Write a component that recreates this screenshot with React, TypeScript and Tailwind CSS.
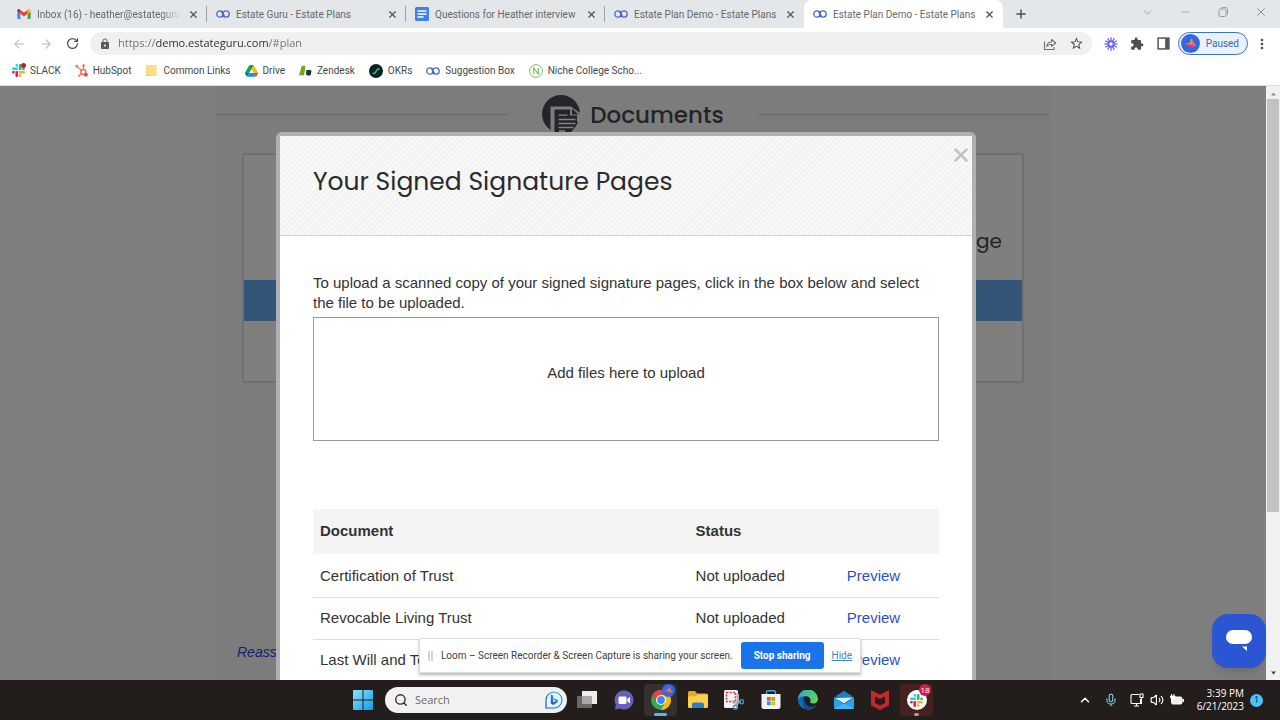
import React from "react";
import {
  ArrowLeft,
  ArrowRight,
  ChevronDown,
  ChevronUp,
  Mic,
  Minus,
  Plus,
  RotateCw,
  Search,
  Volume2,
  X,
} from "lucide-react";
import { MdExtension, MdLock, MdMoreVert, MdOutlineStarBorder } from "react-icons/md";

type IconProps = { className?: string };

const Gmail = () => (
  <svg viewBox="0 0 24 18" className="h-[10px] w-[14px]">
    <path d="M1.6 18H5.5V8.7L0 4.6v11.8C0 17.300.7 18 1.600 18z" fill="#4285f4" />
    <path d="M18.500 18h3.900c.9 0 1.600-.7 1.600-1.600V4.600l-5.500 4.100z" fill="#34a853" />
    <path d="M18.500 1.600v7.100L24 4.600V2.500C24 .4 21.700-.7 20.100.500z" fill="#fbbc04" />
    <path d="M5.500 8.700V1.600L12 6.500l6.500-4.900v7.100L12 13.600z" fill="#ea4335" />
    <path d="M0 2.500v2.100l5.500 4.100V1.600L3.900.5C2.300-.7 0 .4 0 2.500z" fill="#c5221f" />
  </svg>
);

const Rings = () => (
  <svg viewBox="0 0 14 10" className="h-[10px] w-[14px]" fill="none" strokeWidth="1.300">
    <circle cx="4" cy="5" r="3.200" stroke="#4a67c6" />
    <circle cx="10" cy="5" r="3.200" stroke="#4a67c6" />
    <path d="M5.500 3.200L8.500 6.800" stroke="#4a67c6" />
  </svg>
);

const Docs = () => (
  <svg viewBox="0 0 14 14" className="size-[14px]">
    <rect width="14" height="14" rx="1.500" fill="#4080ea" />
    <path d="M2.500 4h9M2.500 7h9M2.500 10h6" stroke="#fff" strokeWidth="1.500" />
  </svg>
);

const Slack = ({ className }: IconProps) => (
  <svg viewBox="0 0 24 24" className={className}>
    <path d="M5 15.200a2.500 2.500 0 1 1-2.500-2.500H5zM6.300 15.200a2.500 2.500 0 0 1 5 0v6.300a2.500 2.500 0 0 1-5 0z" fill="#e01e5a" />
    <path d="M8.800 5a2.500 2.500 0 1 1 2.500-2.500V5zM8.800 6.300a2.500 2.500 0 0 1 0 5H2.500a2.500 2.500 0 0 1 0-5z" fill="#36c5f0" />
    <path d="M19 8.800a2.500 2.500 0 1 1 2.500 2.500H19zM17.700 8.800a2.500 2.500 0 0 1-5 0V2.500a2.500 2.500 0 0 1 5 0z" fill="#2eb67d" />
    <path d="M15.200 19a2.500 2.500 0 1 1-2.500 2.500V19zM15.200 17.700a2.500 2.500 0 0 1 0-5h6.300a2.500 2.500 0 0 1 0 5z" fill="#ecb22e" />
  </svg>
);

const SlackBookmark = () => (
  <span className="relative flex">
    <Slack className="size-[13px]" />
    <span className="absolute -top-px -right-px size-[5px] rounded-full bg-[#d8131d]" />
  </span>
);

const HubSpot = () => (
  <svg viewBox="0 0 14 14" className="size-[13px]" fill="none" stroke="#f0705a">
    <circle cx="9" cy="8.500" r="2.700" strokeWidth="1.600" />
    <path d="M9.200 5.800V2.500M7 7L2.300 2.800M7 10.500l-2.300 2" strokeWidth="1.300" />
    <g fill="#f0705a" stroke="none">
      <circle cx="9.200" cy="1.800" r="1.400" />
      <circle cx="1.900" cy="2.400" r="1.500" />
      <circle cx="4.500" cy="12.600" r="1.200" />
      <circle cx="11.700" cy="11.500" r="2.200" fill="#e14a5a" />
    </g>
  </svg>
);

const Folder = () => (
  <svg viewBox="0 0 14 14" className="size-[13px]">
    <path d="M2 1h10.500v12H1V2a1 1 0 0 1 1-1z" fill="#fbdf82" />
    <path d="M1 11.500L12.500 13H1z" fill="#eecb5e" />
  </svg>
);

const Drive = () => (
  <svg viewBox="0 0 87 78" className="h-[12px] w-[13px]">
    <path d="M6.600 66.850l3.850 6.650c.8 1.400 1.950 2.500 3.300 3.300L27.500 53H0c0 1.550.4 3.100 1.200 4.500z" fill="#0066da" />
    <path d="M43.650 25L29.900 1.200c-1.350.8-2.500 1.900-3.300 3.300L1.200 48.500A9 9 0 0 0 0 53h27.500z" fill="#00ac47" />
    <path d="M73.550 76.800c1.350-.8 2.500-1.900 3.300-3.300l9.250-16c.8-1.400 1.200-2.950 1.200-4.500H59.800l5.850 11.500z" fill="#ea4335" />
    <path d="M43.650 25L57.400 1.200C56.050.4 54.500 0 52.900 0H34.400c-1.600 0-3.150.45-4.500 1.200z" fill="#00832d" />
    <path d="M59.800 53H27.500L13.750 76.800c1.350.8 2.900 1.200 4.500 1.200h50.800c1.600 0 3.150-.45 4.500-1.200z" fill="#2684fc" />
    <path d="M73.400 26.500L60.700 4.500c-.8-1.400-1.950-2.500-3.300-3.300L43.650 25 59.800 53h27.450c0-1.550-.4-3.100-1.200-4.500z" fill="#ffba00" />
  </svg>
);

const Zendesk = () => (
  <svg viewBox="0 0 14 14" className="size-[13px]">
    <path d="M3 2h4L5.500 12H0z" fill="#78a31b" />
    <path d="M8 6.500h4.500l1 1-1 5H9L7.500 11z" fill="#123a3e" />
  </svg>
);

const Okrs = () => (
  <svg viewBox="0 0 14 14" className="size-[14px]">
    <circle cx="7" cy="7" r="7" fill="#0c2127" />
    <path d="M3.500 9c1.500 1 2.500.5 3.500-1.500S9.200 4.500 10.700 5" fill="none" stroke="#2fc08a" strokeWidth="1.500" />
  </svg>
);

const Niche = () => (
  <svg viewBox="0 0 14 14" className="size-[14px]" fill="none" stroke="#7fbb6a">
    <circle cx="7" cy="7" r="6.400" />
    <path d="M4.700 10V4.200l4.600 5.600V4" strokeWidth="1.200" />
  </svg>
);

const Share = () => (
  <svg viewBox="0 0 14 14" className="size-[14px]" fill="none" stroke="#6b6e71" strokeWidth="1.100">
    <path d="M1.500 4.500V12.500H11V10" />
    <path d="M3.800 9.500C4 6.500 5.800 5 8.500 5V2.500L12.800 6 8.500 9.300V7.200C6.500 7.200 5 7.800 3.800 9.500z" strokeLinejoin="round" />
  </svg>
);

const LoomMark = () => (
  <svg viewBox="-8 -8 16 16" className="size-[14px]" stroke="#625df5" strokeWidth="1.400" fill="none">
    <circle r="3" strokeWidth="2" />
    {[0, 30, 60, 90, 120, 150, 180, 210, 240, 270, 300, 330].map((a) => (
      <path key={a} d="M0-3.500V-7.600" transform={`rotate(${a})`} />
    ))}
  </svg>
);

const SidePanel = () => (
  <svg viewBox="0 0 12 12" className="size-[13px]">
    <rect x="1" y="1" width="10" height="10" fill="none" stroke="#54575a" strokeWidth="1.400" />
    <path d="M7.500 1H11v10H7.500z" fill="#54575a" />
  </svg>
);

const Avatar = ({ className }: IconProps) => (
  <svg viewBox="0 0 20 20" className={className}>
    <circle cx="10" cy="10" r="10" fill="#2f6be0" />
    <path d="M3.500 10.500L9 9.500 11 4l1.800 8z" fill="#f58271" />
    <path d="M11 4l5 8.500-3.200 1z" fill="#f0695f" />
    <path d="M3.500 10.500l9 .5.500 4z" fill="#e8464c" />
  </svg>
);

const Restore = () => (
  <svg viewBox="0 0 10 10" className="size-[10px]" fill="none" stroke="#979a9d">
    <rect x="1" y="2" width="7" height="7.500" rx="1.500" />
    <path d="M3 1.500C3.200.8 3.600.6 4.200.6H7.700C8.900.6 9.500 1.300 9.500 2.400V6.500c0 .7-.3 1.100-.9 1.300" />
  </svg>
);

const DocumentsIcon = () => (
  <svg viewBox="0 0 38 38" className="size-[38px]">
    <circle cx="19" cy="19" r="19" fill="#24252a" />
    <path d="M8.500 36V11.500H29L38 18V27H35V20.500H28V14.500H12.500V38H8.500z" fill="#7c7c7c" />
    <path d="M14 38V16H26.500V22H35V27C34 32 31 35 28 38z" fill="#24252a" />
    <path d="M30 13.500L36.500 19.500H30z" fill="#24252a" />
    <path d="M16.500 20.200h9M16.500 24.500h17M16.500 28.500h17M16.500 32.500h15M17 36h6" stroke="#858585" strokeWidth="1.300" />
  </svg>
);

const WindowsLogo = () => (
  <svg viewBox="0 0 20 20" className="size-5">
    <defs>
      <linearGradient id="win" x1="0" y1="0" x2="1" y2="1">
        <stop offset="0" stopColor="#8be3fc" />
        <stop offset="1" stopColor="#129be8" />
      </linearGradient>
    </defs>
    <path d="M0 1a1 1 0 0 1 1-1h8.500v9.500H0zM10.500 0H19a1 1 0 0 1 1 1v8.500h-9.500zM0 10.500h9.500V20H1a1 1 0 0 1-1-1zM10.500 10.500H20V19a1 1 0 0 1-1 1h-8.500z" fill="url(#win)" />
  </svg>
);

const Bing = () => (
  <svg viewBox="0 0 18 18" className="size-[18px]">
    <defs>
      <linearGradient id="bing" x1="0" y1="1" x2="1" y2="0">
        <stop offset="0" stopColor="#1a4fd0" />
        <stop offset="1" stopColor="#2bb5e0" />
      </linearGradient>
    </defs>
    <path d="M1 17V9A8 8 0 1 1 9 17z" fill="#e8f4fd" stroke="url(#bing)" strokeWidth="1.200" />
    <path d="M5.800 3.500L8.200 4.500V11.300L11 9.900 9.400 9.100 8.600 7.200 12.800 8.800V11.200L8.200 14 5.800 12.600z" fill="url(#bing)" />
  </svg>
);

const TaskView = () => (
  <svg viewBox="0 0 20 20" className="size-5">
    <rect x="5" y="1" width="15" height="13" fill="#eeeded" />
    <rect x="0" y="6" width="15" height="12" fill="#777372" fillOpacity=".85" />
    <rect x="5" y="6" width="10" height="8" fill="#a9a7a6" />
  </svg>
);

const TeamsChat = () => (
  <svg viewBox="0 0 20 20" className="size-5">
    <path d="M10 .5a9.500 9.500 0 1 1-4 18.100L1 19.500l.8-4.800A9.500 9.500 0 0 1 10 .5z" fill="#655fc0" />
    <rect x="4.500" y="6.500" width="8" height="7.500" rx="1.200" fill="#fff" />
    <path d="M13.300 9L16 7v6.500l-2.700-2z" fill="#fff" />
  </svg>
);

const Chrome = () => (
  <svg viewBox="0 0 20 20" className="size-5">
    <circle cx="10" cy="10" r="10" fill="#34a853" />
    <path d="M1.340 5A10 10 0 0 1 18.660 5H10L5.670 12.500z" fill="#ea4335" />
    <path d="M18.660 5A10 10 0 0 1 10 20L14.330 12.500 10 5z" fill="#fbbc04" />
    <circle cx="10" cy="10" r="5" fill="#fff" />
    <circle cx="10" cy="10" r="3.900" fill="#4285f4" />
  </svg>
);

const Explorer = () => (
  <svg viewBox="0 0 20 20" className="size-5">
    <path d="M0 2.500A1.500 1.500 0 0 1 1.500 1H7l2 2.500H18A2 2 0 0 1 20 5.500V8H0z" fill="#e9a820" />
    <path d="M0 6.500L7.500 6.500 9.500 4.500H20V16.500A1.500 1.500 0 0 1 18.500 18H1.500A1.500 1.500 0 0 1 0 16.500z" fill="#fcd04b" />
    <path d="M4 18v-3.500A2 2 0 0 1 6 12.500h8a2 2 0 0 1 2 2V18z" fill="#2680c8" />
  </svg>
);

const Snip = () => (
  <svg viewBox="0 0 20 20" className="size-5">
    <rect x="0" y="0" width="14" height="18" rx="1.500" fill="#f3f1f1" />
    <rect x="2.500" y="2.500" width="9" height="9" fill="none" stroke="#c9413c" strokeWidth="1.700" strokeDasharray="2 1.200" />
    <path d="M14 4v8.500l-2 2.500M8.500 12.500h6l2.500-1" fill="none" stroke="#a9b0b6" strokeWidth="2" />
    <circle cx="11.500" cy="17.200" r="2" fill="none" stroke="#2f91cf" strokeWidth="1.400" />
    <circle cx="17.700" cy="11.700" r="2" fill="none" stroke="#2f91cf" strokeWidth="1.400" />
  </svg>
);

const Store = () => (
  <svg viewBox="0 0 20 20" className="size-5">
    <path d="M5.500 4V2A1.500 1.500 0 0 1 7 .7h6A1.500 1.500 0 0 1 14.500 2v2" fill="none" stroke="#3fa9dd" strokeWidth="1.400" />
    <path d="M.5 4h19v12.500A2.500 2.500 0 0 1 17 19H3A2.500 2.500 0 0 1 .5 16.500z" fill="#f2f2f2" />
    <path d="M6 7h3.700v3.700H6z" fill="#e8532e" />
    <path d="M10.400 7h3.700v3.700h-3.700z" fill="#7eb71b" />
    <path d="M6 11.400h3.700v3.700H6z" fill="#1b9fe0" />
    <path d="M10.400 11.400h3.700v3.700h-3.700z" fill="#f6b512" />
  </svg>
);

const Edge = () => (
  <svg viewBox="0 0 20 20" className="size-5">
    <defs>
      <linearGradient id="edge" x1="0" y1="0" x2="1" y2=".3">
        <stop offset="0" stopColor="#2aa5dc" />
        <stop offset="1" stopColor="#5fd35c" />
      </linearGradient>
    </defs>
    <path d="M0 10A10 10 0 0 1 20 8.800C20 12 17.800 13.600 15.200 13.600 12.800 13.600 11.400 12.600 12.300 11.400 13.200 9 11.400 6.300 7.800 6.300 4 6.300 1 8 0 10z" fill="url(#edge)" />
    <path d="M0 10C1 7.800 4 6.300 7.300 6.500 4.500 8 4.500 12 6.800 15 9 17.500 13.500 18.200 18.200 15.200A10 10 0 0 1 0 10z" fill="#1869bd" />
    <path d="M7.300 9C6.200 12.500 9 17.500 15 16.800c1.300-.2 2.300-.8 3.200-1.600A10 10 0 0 1 9 20C4.500 17.500 4 11 7.300 9z" fill="#114d97" />
  </svg>
);

const Mail = () => (
  <svg viewBox="0 0 20 20" className="size-5">
    <path d="M0 7.500L10 .5l10 7V10H0z" fill="#1464ad" />
    <path d="M2.500 5.800L10 1.500l7.500 4.300L10 12z" fill="#1e7cc8" />
    <path d="M1 8l18-.5L10 13.500z" fill="#d9eefb" />
    <path d="M0 7.500l10 6.500 10-6.500V18a1 1 0 0 1-1 1H1a1 1 0 0 1-1-1z" fill="#29a3ea" />
    <path d="M0 19l10-5.500 10 5.500z" fill="#45b4f0" />
  </svg>
);

const McAfee = () => (
  <svg viewBox="0 0 20 20" className="size-5">
    <path d="M1 0l9 4.500L19 0v15.500L10 20l-9-4.500z" fill="#c1272d" />
    <path d="M5 6.500l5 2.600 5-2.600v6.600L10 15.600 5 13.100z" fill="#2a1716" />
  </svg>
);

const Network = () => (
  <svg viewBox="0 0 14 14" className="size-[14px]" fill="none" stroke="#fff" strokeWidth="1.100">
    <path d="M9 1.500H2A1 1 0 0 0 1 2.500v7a1 1 0 0 0 1 1h8.500V6M4 13h5M6.500 10.500V13M10 1h3v3.500h-3zM11.500 4.500V11" />
  </svg>
);

const Battery = () => (
  <svg viewBox="0 0 14 14" className="size-[14px]">
    <rect x="1.500" y="4" width="10.500" height="7" rx="1.500" fill="#ededed" stroke="#fff" />
    <path d="M12.500 6H14v3h-1.500z" fill="#fff" />
    <path d="M1.500 1v2M4 1v2M.5 3H5V5.500L3.500 7 1 5.500z" stroke="#fff" fill="#fff" />
  </svg>
);

const tabs = [
  { title: "Inbox (16) - heather@estateguru", icon: <Gmail /> },
  { title: "Estate Guru - Estate Plans", icon: <Rings /> },
  { title: "Questions for Heather interview", icon: <Docs /> },
  { title: "Estate Plan Demo - Estate Plans", icon: <Rings /> },
  { title: "Estate Plan Demo - Estate Plans", icon: <Rings />, active: true },
];

const bookmarks = [
  { label: "SLACK", icon: <SlackBookmark /> },
  { label: "HubSpot", icon: <HubSpot /> },
  { label: "Common Links", icon: <Folder /> },
  { label: "Drive", icon: <Drive /> },
  { label: "Zendesk", icon: <Zendesk /> },
  { label: "OKRs", icon: <Okrs /> },
  { label: "Suggestion Box", icon: <Rings /> },
  { label: "Niche College Scho...", icon: <Niche /> },
];

const documents = [
  { name: "Certification of Trust", status: "Not uploaded" },
  { name: "Revocable Living Trust", status: "Not uploaded" },
  { name: "Last Will and Testament", status: "Not uploaded" },
];

function TabStrip() {
  return (
    <div className="flex h-7 shrink-0 bg-[#e4e7ea] pl-2 font-[Roboto,sans-serif] text-[10px] text-[#66696c]">
      {tabs.map((tab, i) => (
        <div
          key={i}
          className={
            tab.active
              ? "flex w-[199px] min-w-0 items-center gap-[6px] rounded-t-lg bg-white pr-2 pl-[9px]"
              : "flex w-[199px] min-w-0 items-center gap-[6px] pl-[9px]"
          }
        >
          <span className="flex w-[14px] shrink-0">{tab.icon}</span>
          <button
            className={
              i === 0
                ? "min-w-0 flex-1 mask-r-from-85% text-left whitespace-nowrap"
                : "min-w-0 flex-1 text-left whitespace-nowrap"
            }
          >
            {tab.title}
          </button>
          <button aria-label="Close tab" className="flex w-[11px] shrink-0 justify-center">
            <X size={11} strokeWidth={2.500} color="#4c4f52" />
          </button>
          {!tab.active && <span className={i === 3 ? "ml-px w-px" : "ml-px h-4 w-px bg-[#9da0a3]"} />}
        </div>
      ))}
      <button aria-label="New tab" className="flex w-9 items-center justify-center">
        <Plus size={14} strokeWidth={2.500} color="#4c4f52" />
      </button>
      <div className="ml-auto flex pb-1">
        <button aria-label="Search tabs" className="flex w-[38px] items-center justify-center">
          <ChevronDown size={13} strokeWidth={1.500} color="#979a9d" />
        </button>
        <button aria-label="Minimize" className="flex w-[38px] items-center justify-center">
          <Minus size={12} strokeWidth={1.500} color="#979a9d" />
        </button>
        <button aria-label="Restore" className="flex w-[38px] items-center justify-center">
          <Restore />
        </button>
        <button aria-label="Close window" className="flex w-[38px] items-center justify-center">
          <X size={14} strokeWidth={1.500} color="#858789" />
        </button>
      </div>
    </div>
  );
}

function Toolbar() {
  return (
    <div className="flex h-[31px] shrink-0 items-center bg-white pr-[10px] pl-[5px]">
      <button aria-label="Back" className="flex w-[27px] justify-center">
        <ArrowLeft size={14} strokeWidth={1.800} color="#b4b6b8" />
      </button>
      <button aria-label="Forward" className="flex w-[27px] justify-center">
        <ArrowRight size={14} strokeWidth={1.800} color="#b4b6b8" />
      </button>
      <button aria-label="Reload" className="flex w-[26px] justify-center">
        <RotateCw size={13} strokeWidth={2.300} color="#4c4f52" />
      </button>
      <div className="ml-[5px] flex h-[23px] min-w-0 flex-1 items-center rounded-full bg-[#eff1f1] px-2">
        <MdLock size={12} color="#5a5d60" className="ml-px" />
        <input
          aria-label="Address"
          defaultValue="https://demo.estateguru.com/#plan"
          className="ml-[7px] min-w-0 flex-1 bg-[linear-gradient(to_right,#6b6e71_37px,#27292b_37px,#27292b_150px,#6b6e71_150px)] bg-clip-text text-[11px] text-transparent caret-gray-700 outline-none"
        />
        <button aria-label="Share this page" className="mr-3">
          <Share />
        </button>
        <button aria-label="Bookmark this tab">
          <MdOutlineStarBorder size={15} color="#4c4f52" />
        </button>
      </div>
      <button aria-label="Loom" className="ml-3">
        <LoomMark />
      </button>
      <button aria-label="Extensions" className="ml-3">
        <MdExtension size={14} color="#4c4f52" />
      </button>
      <button aria-label="Side panel" className="ml-[13px]">
        <SidePanel />
      </button>
      <button className="ml-2 flex h-[23px] items-center gap-[6px] rounded-full border border-[#3b74c4] bg-[#e9f1fc] pr-2 pl-[2px] font-[Roboto,sans-serif] text-[10px] text-[#3a69ad]">
        <Avatar className="size-[19px]" />
        Paused
      </button>
      <button aria-label="Menu" className="ml-[6px]">
        <MdMoreVert size={16} color="#4c4f52" />
      </button>
    </div>
  );
}

function Bookmarks() {
  return (
    <nav className="flex h-[27px] shrink-0 gap-[14px] border-b border-[#dcdedf] bg-white px-3 pb-[3px] font-[Roboto,sans-serif] text-[10px] text-[#45484b]">
      {bookmarks.map((b) => (
        <a key={b.label} href="#bookmark" className="flex items-center gap-[5px] whitespace-nowrap">
          {b.icon}
          {b.label}
        </a>
      ))}
    </nav>
  );
}

function PlanPage() {
  return (
    <div className="flex h-full justify-center bg-[#7f7f7f]">
      <div className="w-[834px] bg-[#7c7c7c] pt-[9px]">
        <div className="flex items-center">
          <span className="h-px flex-1 bg-[#686868]" />
          <h1 className="flex items-center gap-[10px] px-[34px] font-[Poppins,Inter,sans-serif] text-[23px] font-medium text-[#222427]">
            <DocumentsIcon />
            <span className="pt-[2px]">Documents</span>
          </h1>
          <span className="h-px flex-1 bg-[#686868]" />
        </div>
        <div className="mx-[26px] mt-5 rounded-[3px] border-2 border-[#707070] bg-[#7f7f7f]">
          <p className="h-[125px] pt-[72px] pr-5 text-right font-[Poppins,Inter,sans-serif] text-xl text-[#222427]">
            Signature Page
          </p>
          <div className="h-[41px] bg-[#335577]" />
          <div className="h-[60px]" />
        </div>
        <a href="#reassess" className="mt-[259px] ml-[21px] block w-max text-sm text-[#14246e] italic">
          Reassess
        </a>
      </div>
    </div>
  );
}

function SignatureDialog() {
  return (
    <div
      role="dialog"
      aria-labelledby="dialog-title"
      className="w-[700px] rounded-t-md border-4 border-b-0 border-[#b0b0b0] bg-white text-[15px] text-[#333]"
    >
      <header className="relative flex h-[100px] items-center border-b border-[#d3d5d5] bg-[repeating-linear-gradient(135deg,#f9f9f9_0px,#f9f9f9_2px,#f2f2f2_2px,#f2f2f2_4px)] px-[33px] pb-2">
        <h2 id="dialog-title" className="font-[Poppins,Inter,sans-serif] text-[25px] text-[#2b2b2d]">
          Your Signed Signature Pages
        </h2>
        <button aria-label="Close" className="absolute top-2 right-0">
          <X size={22} strokeWidth={2.800} color="#c3c3c3" />
        </button>
      </header>
      <div className="px-[33px] pt-[37px]">
        <p className="leading-5">
          To upload a scanned copy of your signed signature pages, click in the box below and select the file to be
          uploaded.
        </p>
        <button className="mt-1 block h-[124px] w-full border border-[#999] pb-3">Add files here to upload</button>
        <table className="mt-[68px] w-full table-fixed text-left">
          <thead>
            <tr className="h-[46px] border-b-3 border-white bg-[#f4f4f4]">
              <th className="w-[60%] pl-[7px]">Document</th>
              <th className="w-[24%] pl-[7px]">Status</th>
              <th className="pl-[7px]" aria-label="Preview" />
            </tr>
          </thead>
          <tbody>
            {documents.map((d) => (
              <tr key={d.name} className="h-[42px] border-b border-[#ddd]">
                <td className="pl-[7px]">{d.name}</td>
                <td className="pl-[7px]">{d.status}</td>
                <td className="pl-2">
                  <a href="#preview" className="text-[#2b50c8]">
                    Preview
                  </a>
                </td>
              </tr>
            ))}
          </tbody>
        </table>
      </div>
    </div>
  );
}

function Scrollbar() {
  return (
    <div className="flex w-[14px] shrink-0 flex-col items-center bg-[#f1f1f1]">
      <svg viewBox="0 0 13 13" className="size-[13px]">
        <path d="M4 9.500L6.500 6.500 9 9.500z" fill="#8a8c8a" />
      </svg>
      <div className="h-[413px] w-3 bg-[#c1c2c2]" />
      <svg viewBox="0 0 13 13" className="mt-auto size-[13px]">
        <path d="M4 4.500L6.500 7.500 9 4.500z" fill="#444" />
      </svg>
    </div>
  );
}

function SharingBar() {
  return (
    <div className="flex h-[35px] items-center border border-[#dedede] bg-white px-2 font-[Roboto,sans-serif] text-[10px] whitespace-nowrap text-[#3c3f42] shadow-[0_2px_3px_rgba(0,0,0,0.3)]">
      <span className="h-[10px] w-[5px] border-x-2 border-[#d4d4d4]" />
      <span className="ml-2">Loom – Screen Recorder &amp; Screen Capture is sharing your screen.</span>
      <button className="ml-2 h-[27px] rounded-[3px] bg-[#1a73e8] px-[13px] font-bold text-white">
        Stop sharing
      </button>
      <button className="ml-2 text-[#3d82cc] underline">Hide</button>
    </div>
  );
}

function Taskbar() {
  return (
    <footer className="grid h-10 shrink-0 grid-cols-[1fr_auto_1fr] items-center bg-[#231e1c]">
      <span />
      <div className="flex items-center pl-2">
        <button aria-label="Start" className="mr-3">
          <WindowsLogo />
        </button>
        <label className="mr-px flex h-[26px] w-[182px] items-center rounded-full bg-[#f1f1f1] pr-1 pl-[9px]">
          <Search size={14} strokeWidth={2.300} color="#2c2c2c" />
          <input
            aria-label="Search"
            placeholder="Search"
            className="ml-[7px] min-w-0 flex-1 bg-transparent text-[11px] outline-none placeholder:text-[#6a6a6a]"
          />
          <Bing />
        </label>
        <button aria-label="Task view" className="flex w-[37px] justify-center"><TaskView /></button>
        <button aria-label="Chat" className="flex w-[37px] justify-center"><TeamsChat /></button>
        <button aria-label="Chrome" className="relative flex h-8 w-[37px] items-center justify-center">
          <span className="flex h-8 w-[33px] items-center justify-center rounded-sm bg-[#35302f]"><Chrome /></span>
          <Avatar className="absolute top-0 right-1 size-[13px]" />
          <span className="absolute bottom-0 h-[3px] w-[13px] rounded-full bg-[#5cb7e8]" />
        </button>
        <button aria-label="File Explorer" className="flex w-[37px] justify-center"><Explorer /></button>
        <button aria-label="Snipping Tool" className="flex w-[36px] justify-center"><Snip /></button>
        <button aria-label="Store" className="flex w-[37px] justify-center"><Store /></button>
        <button aria-label="Edge" className="flex w-[37px] justify-center"><Edge /></button>
        <button aria-label="Mail" className="flex w-[36px] justify-center"><Mail /></button>
        <button aria-label="McAfee" className="flex w-[36px] justify-center"><McAfee /></button>
        <button aria-label="Slack" className="relative flex h-8 w-[37px] items-center justify-center">
          <span className="flex h-8 w-[33px] items-center justify-center rounded-sm bg-[#43211f]">
            <span className="flex size-5 items-center justify-center rounded-full bg-white"><Slack className="size-[13px]" /></span>
          </span>
          <span className="absolute top-0 right-1 flex size-3 items-center justify-center rounded-full bg-[#cf1e4c] text-[8px] text-white">18</span>
          <span className="absolute bottom-0 h-[3px] w-[5px] rounded-full bg-[#e9838c]" />
        </button>
      </div>
      <div className="flex items-center justify-end pr-[17px] text-white">
        <ChevronUp size={14} strokeWidth={2.500} />
        <Mic size={14} strokeWidth={2} color="#7cc3e0" className="ml-3" />
        <span className="ml-3"><Network /></span>
        <Volume2 size={14} strokeWidth={2} className="ml-[6px]" />
        <span className="ml-[6px]"><Battery /></span>
        <div className="ml-[13px] text-right text-[10px] leading-[13px]">
          <div>3:39 PM</div>
          <div>6/21/2023</div>
        </div>
        <span className="ml-[6px] flex size-[13px] items-center justify-center rounded-full bg-[#4cc2ff] text-[9px] text-[#123]">1</span>
      </div>
    </footer>
  );
}

export default function App() {
  return (
    <div className="flex h-screen flex-col overflow-hidden font-['Segoe_UI','Open_Sans',sans-serif]">
      <TabStrip />
      <Toolbar />
      <Bookmarks />
      <div className="relative flex min-h-0 flex-1">
        <main className="relative min-w-0 flex-1 overflow-hidden font-['Liberation_Sans',Arial,sans-serif]">
          <PlanPage />
          <div className="absolute inset-0 flex items-start justify-center overflow-hidden pt-[46px] pr-[14px]">
            <SignatureDialog />
          </div>
          <button
            aria-label="Open chat"
            className="absolute right-0 bottom-3 flex size-[54px] items-center justify-center rounded-2xl bg-[#2b55d3] shadow-lg"
          >
            <svg viewBox="0 0 28 24" className="h-6 w-7">
              <rect x="1" y="1" width="26" height="14" rx="7" fill="#fff" />
              <path d="M17 17.500h5V22z" fill="#fff" />
            </svg>
          </button>
        </main>
        <Scrollbar />
        <div className="absolute inset-x-0 bottom-[7px] flex justify-center">
          <SharingBar />
        </div>
      </div>
      <Taskbar />
    </div>
  );
}
